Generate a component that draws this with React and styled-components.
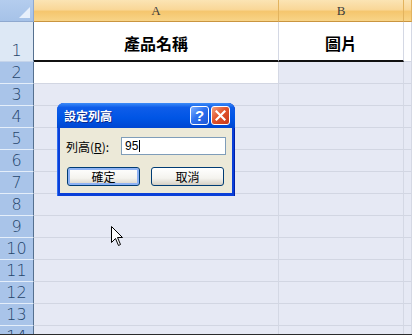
import React from "react";
import styled, { createGlobalStyle } from "styled-components";

const Global = createGlobalStyle`
  html, body { margin: 0; padding: 0; background: #fff; }
  body { font-family: "Liberation Sans", "Noto Sans CJK TC", sans-serif; }
`;

const Frame = styled.div`
  position: relative;
  width: 412px;
  height: 334px;
  overflow: hidden;
  border-bottom: 1px solid #2b2b2b;
`;

const Grid = styled.div`
  display: grid;
  grid-template-columns: 34px 245px 125px 1fr;
  grid-template-rows: 22px 40px repeat(13, 22px);
`;

const Corner = styled.div`
  position: relative;
  background: linear-gradient(#b4cdee, #a6c2e8);
  border-right: 1px solid #8fa9cf;
  border-bottom: 1px solid #8fa9cf;
  box-sizing: border-box;
  &::after {
    content: "";
    position: absolute;
    right: 3px;
    bottom: 3px;
    width: 0;
    height: 0;
    border-left: 11px solid transparent;
    border-bottom: 11px solid #e8f0fb;
  }
`;

const ColHead = styled.div`
  display: flex;
  align-items: center;
  justify-content: center;
  box-sizing: border-box;
  background: linear-gradient(#fbe4b4 0%, #f9d798 45%, #f5c66e 55%, #f8d488 100%);
  border-right: 1px solid #e2b35e;
  border-bottom: 1px solid #c9953f;
  font-family: "Liberation Serif", serif;
  font-size: 13px;
  color: #3b3b3b;
`;

const RowHead = styled.div`
  display: flex;
  justify-content: center;
  align-items: ${(p) => (p.$tall ? "flex-end" : "center")};
  padding-bottom: ${(p) => (p.$tall ? "2px" : "0")};
  box-sizing: border-box;
  background: ${(p) => (p.$sel ? "#a9c4e9" : "#dde8f5")};
  border-bottom: 1px solid ${(p) => (p.$sel ? "#e4eefa" : "#c5d4ea")};
  border-right: 1px solid #55708f;
  font-family: "DejaVu Sans", sans-serif;
  font-size: 16px;
  font-weight: 300;
  color: #25446b;
  line-height: 1;
`;

const Cell = styled.div`
  box-sizing: border-box;
  background: ${(p) => (p.$active ? "#ffffff" : p.$sel ? "#e6e9f4" : "#ffffff")};
  border-right: 1px solid #d4d8e4;
  border-bottom: ${(p) => (p.$thick ? "2px solid #111" : "1px solid #d2d6e2")};
`;

const TitleCell = styled(Cell)`
  display: flex;
  align-items: center;
  justify-content: center;
  padding-top: 4px;
  font-family: "Noto Sans CJK TC", sans-serif;
  font-size: 16px;
  font-weight: 700;
  color: #000;
`;

const Dialog = styled.div`
  position: absolute;
  left: 57px;
  top: 103px;
  width: 178px;
  height: 93px;
  box-sizing: border-box;
  display: flex;
  flex-direction: column;
  background: #0a3fd8;
  border-radius: 7px 7px 0 0;
  padding: 0 3px 3px 3px;
  box-shadow: inset 1px 0 0 #2c6cf0, inset -1px 0 0 #0020a8;
`;

const TitleBar = styled.div`
  height: 25px;
  display: flex;
  align-items: center;
  gap: 2px;
  padding: 0 2px 0 4px;
  background: linear-gradient(#3d8cf8 0%, #0f5de9 18%, #0055e5 60%, #0046d2 100%);
  margin: 0 -3px;
  padding-left: 7px;
  padding-right: 5px;
  border-radius: 7px 7px 0 0;
`;

const TitleText = styled.span`
  flex: 1;
  color: #fff;
  font-family: "Noto Sans CJK TC", sans-serif;
  font-weight: 700;
  font-size: 12px;
  text-shadow: 1px 1px 0 #0a2a90;
`;

const CapButton = styled.div`
  width: 19px;
  height: 19px;
  box-sizing: border-box;
  border: 1px solid #fff;
  border-radius: 3px;
  display: flex;
  align-items: center;
  justify-content: center;
  background: ${(p) =>
    p.$close
      ? "linear-gradient(135deg, #f0a080 0%, #e2542c 45%, #c8381a 100%)"
      : "linear-gradient(135deg, #7eb0ff 0%, #2e72f0 45%, #1e55d6 100%)"};
  color: #fff;
  font-family: "Liberation Sans", sans-serif;
  font-weight: 700;
  font-size: 15px;
  line-height: 1;
`;

const Body = styled.div`
  flex: 1;
  background: #ece9d8;
  display: flex;
  flex-direction: column;
  padding: 9px 6px 0 6px;
  gap: 12px;
`;

const FieldRow = styled.div`
  display: flex;
  align-items: center;
  gap: 3px;
`;

const Label = styled.span`
  font-family: "Noto Sans CJK TC", sans-serif;
  font-size: 12px;
  color: #000;
  white-space: nowrap;
  width: 53px;
  u { text-decoration: underline; }
`;

const Input = styled.div`
  width: 107px;
  height: 18px;
  box-sizing: border-box;
  border: 1px solid #7f9db9;
  background: #fff;
  font-family: "Liberation Sans", sans-serif;
  font-size: 12px;
  line-height: 16px;
  padding-left: 3px;
  color: #000;
  display: flex;
  align-items: center;
`;

const Caret = styled.span`
  display: inline-block;
  width: 1px;
  height: 12px;
  background: #000;
  margin-left: 1px;
`;

const ButtonRow = styled.div`
  display: flex;
  gap: 11px;
  padding-left: 1px;
`;

const Btn = styled.div`
  width: 73px;
  height: 19px;
  box-sizing: border-box;
  border: 1px solid #003c74;
  border-radius: 3px;
  background: linear-gradient(#ffffff 0%, #f4f3ee 60%, #d6d0c5 100%);
  box-shadow: ${(p) =>
    p.$default ? "inset 0 0 0 2px #8eb2f4" : "inset 0 -1px 0 #d6d0c5"};
  display: flex;
  align-items: center;
  justify-content: center;
  font-family: "Noto Sans CJK TC", sans-serif;
  font-size: 12px;
  color: #000;
`;

const Cursor = styled.svg`
  position: absolute;
  left: 111px;
  top: 226px;
`;

const rows = [2, 3, 4, 5, 6, 7, 8, 9, 10, 11, 12, 13, 14];

export default function App() {
  return (
    <>
      <Global />
      <Frame>
        <Grid>
          <Corner />
          <ColHead>A</ColHead>
          <ColHead>B</ColHead>
          <ColHead />

          <RowHead $tall>1</RowHead>
          <TitleCell $thick>產品名稱</TitleCell>
          <TitleCell $thick>圖片</TitleCell>
          <Cell />

          {rows.map((r) => (
            <React.Fragment key={r}>
              <RowHead $sel>{r}</RowHead>
              <Cell $sel $active={r === 2} />
              <Cell $sel />
              <Cell $sel />
            </React.Fragment>
          ))}
        </Grid>

        <Dialog>
          <TitleBar>
            <TitleText>設定列高</TitleText>
            <CapButton>?</CapButton>
            <CapButton $close>
              <svg width="11" height="11" viewBox="0 0 11 11">
                <path d="M1.5 1.5 L9.5 9.5 M9.5 1.5 L1.5 9.5" stroke="#fff" strokeWidth="2.2" strokeLinecap="square" />
              </svg>
            </CapButton>
          </TitleBar>
          <Body>
            <FieldRow>
              <Label>
                列高(<u>R</u>):
              </Label>
              <Input>
                95<Caret />
              </Input>
            </FieldRow>
            <ButtonRow>
              <Btn $default>確定</Btn>
              <Btn>取消</Btn>
            </ButtonRow>
          </Body>
        </Dialog>

        <Cursor width="13" height="21" viewBox="0 0 13 21">
          <path
            d="M0.5 0.5 L0.5 16.5 L4.5 12.5 L7.5 19.5 L9.5 18.5 L6.5 11.5 L11.5 11.5 Z"
            fill="#fff"
            stroke="#000"
            strokeWidth="1"
            strokeLinejoin="miter"
          />
        </Cursor>
      </Frame>
    </>
  );
}
